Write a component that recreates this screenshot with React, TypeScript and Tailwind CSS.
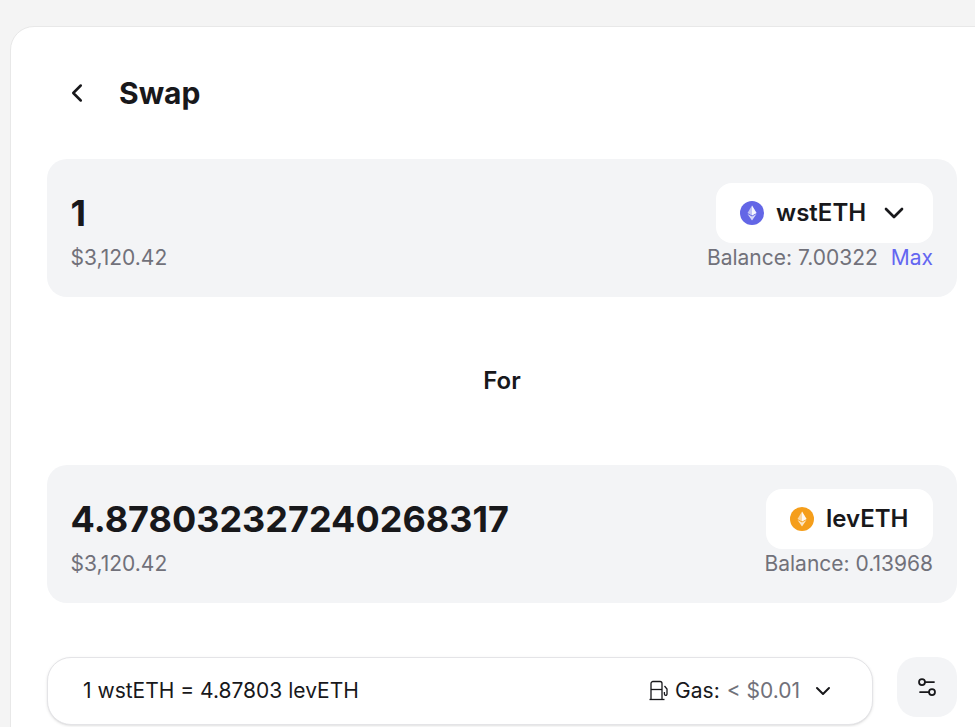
import { ChevronDown, ChevronLeft, Settings2 } from "lucide-react";

function EthCoin({ color }: { color: string }) {
  return (
    <svg width="24" height="24" viewBox="0 0 24 24" className="shrink-0">
      <circle cx="12" cy="12" r="12" fill={color} />
      <path d="M12 4.5 7.5 12l4.5 2.6 4.5-2.6z" fill="#fff" fillOpacity="0.6" />
      <path d="M12 4.5V14.6l4.5-2.6z" fill="#fff" fillOpacity="0.85" />
      <path d="M7.5 12.9 12 19.5l4.5-6.6-4.5 2.6z" fill="#fff" fillOpacity="0.75" />
    </svg>
  );
}

function GasPump() {
  return (
    <svg width="20" height="22" viewBox="0 0 20 22" fill="none" stroke="#18181b" strokeWidth="1.3" className="mr-[6px] shrink-0">
      <path d="M0.5 19.5h15" />
      <path d="M2 19.5V3.5a2 2 0 0 1 2-2h7a2 2 0 0 1 2 2v16" />
      <path d="M2 9.5h11" />
      <path d="M15.5 6l2.5 3v5a1.3 1.3 0 0 1-2.6 0v-2" />
    </svg>
  );
}

function TokenPanel({
  amount,
  children,
  balance,
}: {
  amount: string;
  children: React.ReactNode;
  balance: React.ReactNode;
}) {
  return (
    <div className="flex h-[138px] items-start justify-between rounded-[20px] bg-[#f3f4f6] p-6">
      <div className="-ml-[0.5px] flex flex-col">
        <div className="flex h-[60px] items-center text-[36px] font-bold leading-none text-[#18181b]">{amount}</div>
        <div className="mt-[1px] text-[21px] leading-[28px] text-[#71717a]">$3,120.42</div>
      </div>
      <div className="flex flex-col items-end">
        {children}
        <div className="mt-[1px] flex gap-[13px] text-[21px] leading-[28px] text-[#71717a]">{balance}</div>
      </div>
    </div>
  );
}

export default function App() {
  return (
    <div className="h-[727px] w-[975px] overflow-hidden bg-[#f4f4f4] pl-[10px] pt-[26px] font-['Inter',sans-serif]">
      <div className="h-[760px] w-[984px] rounded-tl-[24px] border border-[#e8e8e8] bg-white px-9">
        <div className="flex h-[132px] items-center gap-[27px] pl-[15px]">
          <ChevronLeft size={30} strokeWidth={2} className="text-[#18181b]" />
          <h1 className="text-[30px] font-bold leading-none text-[#18181b]">Swap</h1>
        </div>

        <TokenPanel
          amount="1"
          balance={
            <>
              <span>Balance: 7.00322</span>
              <span className="text-[#6366f1]">Max</span>
            </>
          }
        >
          <button className="flex h-[60px] w-[217px] items-center gap-3 rounded-2xl bg-white pl-6 text-[24px] font-semibold text-[#18181b]">
            <EthCoin color="#6366e6" />
            wstETH
            <ChevronDown size={32} strokeWidth={2} />
          </button>
        </TokenPanel>

        <div className="flex h-[168px] items-center justify-center text-[24px] font-semibold text-[#18181b]">For</div>

        <TokenPanel amount="4.878032327240268317" balance={<span>Balance: 0.13968</span>}>
          <button className="flex h-[60px] w-[167px] items-center gap-3 rounded-2xl bg-white pl-6 text-[24px] font-semibold text-[#18181b]">
            <EthCoin color="#f59e1b" />
            levETH
          </button>
        </TokenPanel>

        <div className="mt-[54px] flex items-start gap-6">
          <div className="flex h-[68px] w-[826px] items-center justify-between rounded-[24px] border border-[#e4e4e7] bg-white pl-[35px] pr-[37px] text-[21px] text-[#18181b] shadow-sm">
            <span>1 wstETH = 4.87803 levETH</span>
            <div className="flex items-center">
              <GasPump />
              <span>Gas:</span>
              <span className="ml-[7px] text-[#71717a]">&lt; $0.01</span>
              <ChevronDown size={24} strokeWidth={2} className="ml-[11px]" />
            </div>
          </div>
          <button className="flex h-[60px] w-[60px] items-center justify-center rounded-[20px] bg-[#f3f4f6]">
            <Settings2 size={24} strokeWidth={1.75} className="text-[#18181b]" />
          </button>
        </div>
      </div>
    </div>
  );
}
